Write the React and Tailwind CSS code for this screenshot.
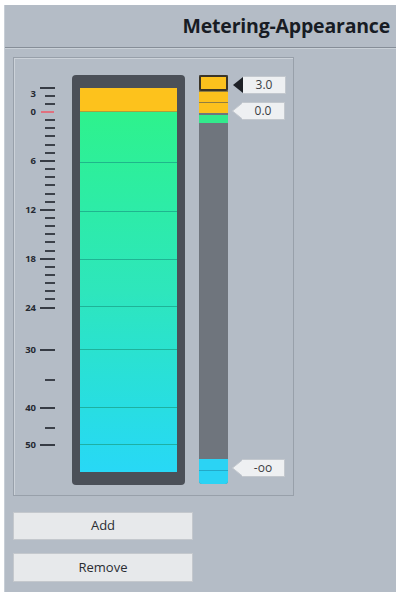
import React from 'react';

// dB ticks of the left ruler; y is in px from the top of the meter box
const dbY = d => (d <= 24 ? 37 + d * 8.15 : { 30: 275, 35: 305, 40: 333, 45: 353, 50: 370 }[d]);
const ticks = [];
for (let d = -3; d <= 24; d++) ticks.push(d);
ticks.push(30, 35, 40, 45, 50);
const longTicks = [-3, 6, 12, 18, 24, 30, 40, 50];
const labels = [-3, 0, 6, 12, 18, 24, 30, 40, 50];

// green part of the big meter, split at 6/12/18/24/30/40/50 dB
const segments = [51, 49, 48, 47, 43, 58, 37, 27];

function Ruler() {
    return (
        <div className="relative w-[58px] h-[410px] shrink-0">
            {ticks.map(d => {
                const isLong = longTicks.includes(d);
                const isZero = d === 0;
                return (
                    <div
                        key={'t' + d}
                        className={`absolute h-[2px] ${isZero ? 'bg-[#e0707e] left-[27px] w-[13px]' : isLong ? 'bg-[#363b44] left-[26px] w-[15px]' : 'bg-[#3c414a] left-[31px] w-[10px]'}`}
                        style={{ top: dbY(d) - 1 }}
                    />
                );
            })}
            {labels.map(d => (
                <div
                    key={'l' + d}
                    className="absolute left-0 w-[22px] h-[12px] text-right text-[9.5px] leading-[12px] font-bold text-[#262a32]"
                    style={{ top: d === -3 ? 13 : dbY(d) - 6 }}
                >
                    {Math.abs(d)}
                </div>
            ))}
        </div>
    );
}

function Meter() {
    return (
        <div className="w-[113px] h-[410px] shrink-0 bg-[#4b5058] rounded-[4px] px-[8px] py-[13px]">
            <div className="h-full flex flex-col">
                <div className="h-[24px] bg-[#fdc21c] border-b border-[#a9a03c]" />
                <div className="flex-1 flex flex-col bg-linear-to-b from-[#2ef28c] via-[#2ee6bc] to-[#28d8f6]">
                    {segments.map((h, i) => (
                        <div
                            key={i}
                            className={i < segments.length - 1 ? 'border-b border-[#1a9e84]/70' : ''}
                            style={{ height: h }}
                        />
                    ))}
                </div>
            </div>
        </div>
    );
}

function PeakBar() {
    return (
        <div className="ml-[14px] w-[29px] h-[409px] shrink-0 bg-[#6f757d] rounded-b-[3px] flex flex-col">
            <div className="h-[16px] bg-[#fcc11d] border-2 border-[#3b3426] rounded-[2px]" />
            <div className="h-[1px] bg-[#8f7e42]" />
            <div className="h-[10px] bg-[#fcc11d]" />
            <div className="h-[1px] bg-[#8f7e42]" />
            <div className="h-[10px] bg-[#fcc11d]" />
            <div className="h-[2px]" />
            <div className="h-[8px] bg-[#33ea8c]" />
            <div className="flex-1" />
            <div className="h-[11px] bg-[#2bd3f4]" />
            <div className="h-[1px] bg-[#22a9c8]" />
            <div className="h-[13px] bg-[#2bd3f4] rounded-b-[3px]" />
        </div>
    );
}

function Flag({ value, dark, className = '' }) {
    return (
        <div className={`flex items-center h-[18px] ${className}`}>
            {dark ? (
                <svg width="11" height="18" viewBox="0 0 11 18" className="shrink-0">
                    <polygon points="1,9 11,1 11,17" fill="#1d2026" />
                </svg>
            ) : (
                <svg width="11" height="18" viewBox="0 0 11 18" className="shrink-0 -mr-[1px]">
                    <polygon points="0.5,9 11,0.5 11,17.5" fill="#eef0f2" stroke="#c3c8ce" strokeWidth="1" />
                    <rect x="10" y="1" width="2" height="16" fill="#eef0f2" />
                </svg>
            )}
            <div className="w-[43px] h-[18px] bg-[#eef0f2] border border-[#c3c8ce] border-l-0 flex items-center justify-center text-[12px] text-[#3a3d42]">
                {value}
            </div>
        </div>
    );
}

export default function App() {
    return (
        <div className="w-[401px] h-[592px] bg-white pt-[5px] pl-[4px] overflow-hidden" style={{ fontFamily: '"Open Sans", "Noto Sans", sans-serif' }}>
            <div className="w-[392px] h-[587px] bg-[#b4bcc6] border-l border-[#c7ced6] flex flex-col">
                <div className="h-[43px] shrink-0 flex items-center justify-end pr-[6px] border-b border-[#868e98] shadow-[0_1px_0_#c9d0d7]">
                    <h1 className="text-[19.5px] font-bold text-[#181c24] tracking-[-0.2px]">Metering-Appearance</h1>
                </div>

                <div className="mt-[9px] ml-[8px] w-[281px] h-[439px] shrink-0 border border-[#98a0aa] shadow-[inset_1px_1px_0_#ccd2d9] flex items-start pt-[17px]">
                    <Ruler />
                    <Meter />
                    <PeakBar />
                    <div className="ml-[4px] w-[54px] h-[409px] flex flex-col">
                        <Flag value="3.0" dark className="mt-[1px]" />
                        <Flag value="0.0" className="mt-[8px]" />
                        <Flag value="-oo" className="mt-[339px]" />
                    </div>
                </div>

                <div className="ml-[8px] mt-[16px] flex flex-col gap-[13px]">
                    <button className="w-[180px] h-[28px] bg-[#e7e9eb] border border-[#c4c8cd] text-[13px] text-[#2a2d32]">Add</button>
                    <button className="w-[180px] h-[29px] bg-[#e7e9eb] border border-[#c4c8cd] text-[13px] text-[#2a2d32]">Remove</button>
                </div>
            </div>
        </div>
    );
}
